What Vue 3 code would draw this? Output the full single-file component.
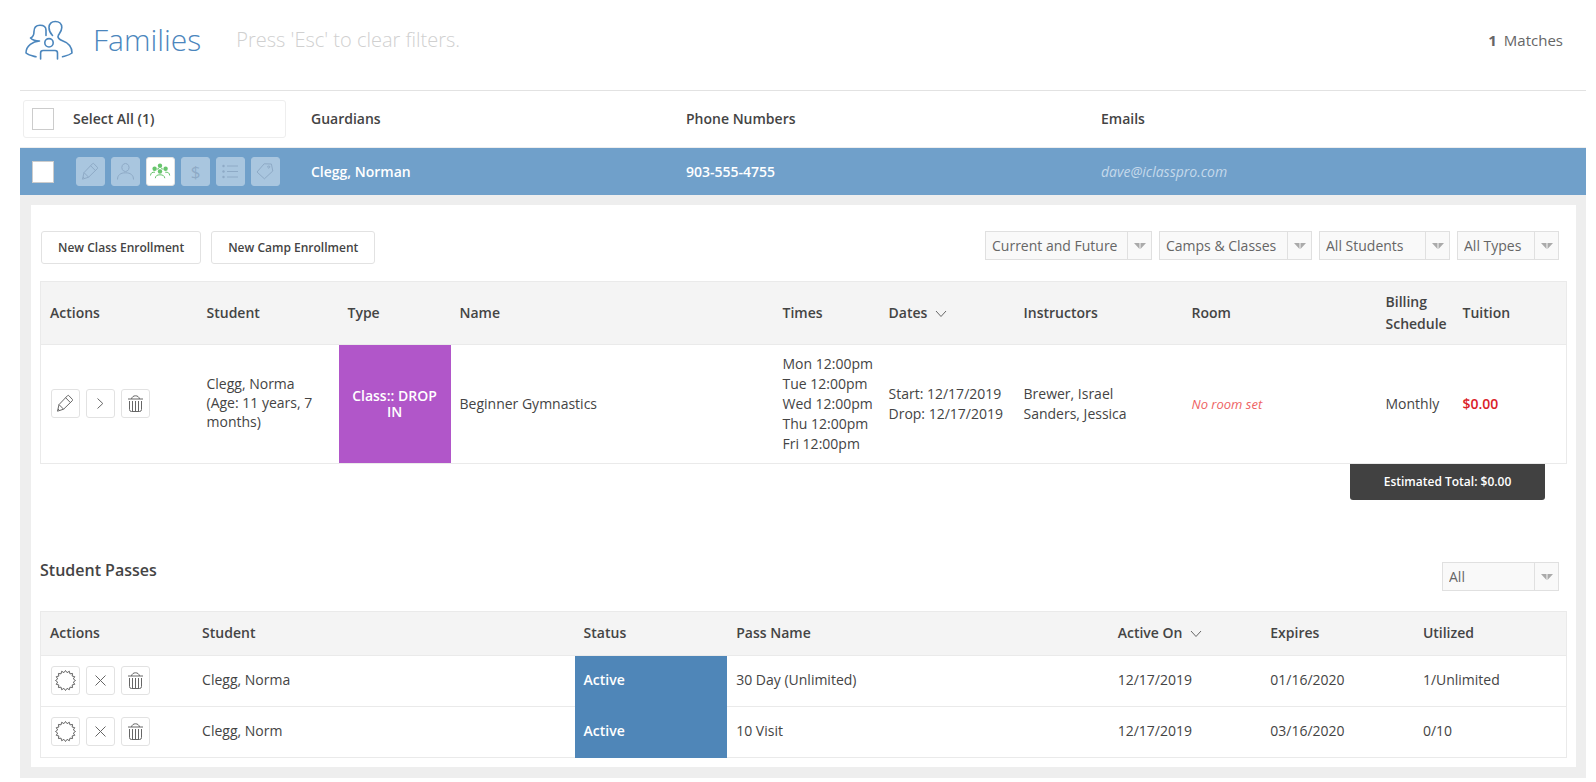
<script setup>
import { ref } from 'vue'

const selectAll = ref(false)
const rowSelected = ref(false)

const filters = [
  { id: 'period', label: 'Enrollment period', value: 'Current and Future', size: 'w-xl' },
  { id: 'kind', label: 'Camps or classes', value: 'Camps & Classes', size: 'w-lg' },
  { id: 'students', label: 'Students', value: 'All Students', size: 'w-md' },
  { id: 'types', label: 'Types', value: 'All Types', size: 'w-sm' },
]

const times = ['Mon 12:00pm', 'Tue 12:00pm', 'Wed 12:00pm', 'Thu 12:00pm', 'Fri 12:00pm']

const passes = [
  { student: 'Clegg, Norma', status: 'Active', name: '30 Day (Unlimited)', activeOn: '12/17/2019', expires: '01/16/2020', used: '1/Unlimited' },
  { student: 'Clegg, Norm', status: 'Active', name: '10 Visit', activeOn: '12/17/2019', expires: '03/16/2020', used: '0/10' },
]

const burst = Array.from({ length: 32 }, (_, i) => {
  const r = i % 2 ? 8 : 10
  const a = (i * Math.PI) / 16
  return `${(13.5 + r * Math.sin(a)).toFixed(2)},${(13.5 - r * Math.cos(a)).toFixed(2)}`
}).join(' ')

const icons = {
  pencil: 'M5.5 21.2L7 14.6 15.6 5.6Q16.2 5 16.8 5.6L20.4 9.4Q21 10 20.4 10.6L11.6 19.2ZM7 14.6L11.6 19.2M13.6 7.7L18.4 12.6M6 19L7.8 20.7',
  next: 'M10.5 8.5L15.8 13.5 10.5 18.5',
  trash: 'M6 9H21M9.5 9C10 6.8 11.5 5.8 13.5 5.8S17 6.8 17.5 9M7.5 11V19.5Q7.5 21.5 9.5 21.5H17.5Q19.5 21.5 19.5 19.5V11M10.5 11V21.5M13.5 11V21.5M16.5 11V21.5',
  close: 'M8.5 8.5L18.5 18.5M18.5 8.5L8.5 18.5',
  person: 'M13.5 5.5A3.6 4 0 1 1 13.4 5.5M5.5 21.5C5.5 17 8.5 14.8 13.5 14.8S21.5 17 21.5 21.5',
  list: 'M10 8H21M10 13.5H21M10 19H21',
  tag: 'M5 14L12.2 5.8 19.4 6 20.8 13 12.4 20.8ZM16.8 8A1 1 0 1 1 16.7 8',
}
</script>

<template>
  <main class="page">
    <header class="top">
      <svg class="logo" viewBox="0 0 48 40" aria-hidden="true">
        <path d="M27.5 15.500C25 13 24 10 24 7.500C24 3.700 26.500 1.500 30.300 1.500C34.300 1.500 36.800 4 36.800 7.500C36.800 11 34.500 13.500 33.500 15C32 17.500 34 19.500 38 21C45 23.500 47 27.500 47 33C44 35.500 40 36 37.500 36.800" />
        <path d="M21 15.500V10C21 7 18.500 5.200 15 5.200C10.500 5.200 9 8.500 9 11.500C9 15 8 17 5.500 18C7.500 20 11 21 14.500 21C8 21.500 1 25.500 1 33C4 35.500 8 36 11 36.800" />
        <circle cx="24" cy="22.800" r="4.200" />
        <path d="M15.600 39V33Q15.600 30.500 18.100 30.500H30Q32.500 30.500 32.500 33V39" />
      </svg>
      <h1>Families</h1>
      <p class="hint">Press 'Esc' to clear filters.</p>
      <p class="matches"><strong>1</strong>Matches</p>
    </header>

    <section class="list">
      <div class="cols heads">
        <label class="select-all">
          <input v-model="selectAll" type="checkbox" class="check" />
          <span>Select All (1)</span>
        </label>
        <span>Guardians</span>
        <span>Phone Numbers</span>
        <span>Emails</span>
      </div>

      <div class="cols family">
        <div class="tools">
          <input v-model="rowSelected" type="checkbox" class="check" aria-label="Select Clegg, Norman" />
          <div class="btns">
            <button type="button" class="icon tint" aria-label="Edit"><svg viewBox="0 0 27 27"><path :d="icons.pencil" /></svg></button>
            <button type="button" class="icon tint" aria-label="Guardian"><svg viewBox="0 0 27 27"><path :d="icons.person" /></svg></button>
            <button type="button" class="icon on" aria-label="Enrollments">
              <svg viewBox="0 0 27 27">
                <g class="solid"><circle cx="13" cy="7.700" r="2.200" /><circle cx="7.600" cy="10.700" r="2.200" /><circle cx="18.600" cy="10.700" r="2.200" /><circle cx="13" cy="13.500" r="2.200" /></g>
                <path d="M3.500 17.500C3.700 15 5 14 8 14.200M22.700 17.500C22.500 15 21.200 14 18.200 14.200M8.300 20.200C8.600 17.800 10 16.800 13 16.800S17.500 17.800 17.800 20.200M9.800 11.500C10.500 10.800 11.200 10.600 12 10.600M16.300 11.500C15.600 10.800 14.900 10.600 14.100 10.600" />
              </svg>
            </button>
            <button type="button" class="icon tint money" aria-label="Billing">$</button>
            <button type="button" class="icon tint" aria-label="Details">
              <svg viewBox="0 0 27 27"><path :d="icons.list" /><g class="solid"><circle cx="6.500" cy="8" r="1.200" /><circle cx="6.500" cy="13.500" r="1.200" /><circle cx="6.500" cy="19" r="1.200" /></g></svg>
            </button>
            <button type="button" class="icon tint" aria-label="Tags"><svg viewBox="0 0 27 27"><path :d="icons.tag" /></svg></button>
          </div>
        </div>
        <span>Clegg, Norman</span>
        <span>903-555-4755</span>
        <a href="mailto:dave@iclasspro.com">dave@iclasspro.com</a>
      </div>

      <div class="detail">
        <div class="bar">
          <div class="new">
            <button type="button" class="btn">New Class Enrollment</button>
            <button type="button" class="btn">New Camp Enrollment</button>
          </div>
          <div class="filters">
            <div v-for="f in filters" :key="f.id" class="drop" :class="f.size">
              <select :id="f.id" :aria-label="f.label"><option>{{ f.value }}</option></select>
              <span class="arrow"><svg viewBox="0 0 12 6"><path d="M0 0H5.500V6ZM6.500 0H12L6.500 6Z" /></svg></span>
            </div>
          </div>
        </div>

        <table class="enroll">
          <colgroup>
            <col class="c-act" /><col class="c-stu" /><col class="c-type" /><col /><col class="c-time" />
            <col class="c-date" /><col class="c-inst" /><col class="c-room" /><col class="c-bill" /><col class="c-tui" />
          </colgroup>
          <thead>
            <tr>
              <th>Actions</th><th>Student</th><th>Type</th><th>Name</th><th>Times</th>
              <th>Dates<svg class="sort" viewBox="0 0 12 8"><path d="M1 1L6 6.500 11 1" /></svg></th>
              <th>Instructors</th><th>Room</th><th>Billing Schedule</th><th>Tuition</th>
            </tr>
          </thead>
          <tbody>
            <tr>
              <td>
                <div class="btns">
                  <button type="button" class="icon" aria-label="Edit"><svg viewBox="0 0 27 27"><path :d="icons.pencil" /></svg></button>
                  <button type="button" class="icon" aria-label="Open"><svg viewBox="0 0 27 27"><path :d="icons.next" /></svg></button>
                  <button type="button" class="icon" aria-label="Delete"><svg viewBox="0 0 27 27"><path :d="icons.trash" /></svg></button>
                </div>
              </td>
              <td class="student">Clegg, Norma<br />(Age: 11 years, 7 months)</td>
              <td class="type">Class:: DROP IN</td>
              <td>Beginner Gymnastics</td>
              <td class="times"><div v-for="t in times" :key="t">{{ t }}</div></td>
              <td>Start: 12/17/2019<br />Drop: 12/17/2019</td>
              <td>Brewer, Israel<br />Sanders, Jessica</td>
              <td class="noroom">No room set</td>
              <td>Monthly</td>
              <td class="cost">$0.00</td>
            </tr>
          </tbody>
        </table>
        <div class="total">Estimated Total: $0.00</div>

        <div class="passes-head">
          <h2>Student Passes</h2>
          <div class="drop w-xs">
            <select id="pass-filter" aria-label="Pass filter"><option>All</option></select>
            <span class="arrow"><svg viewBox="0 0 12 6"><path d="M0 0H5.500V6ZM6.500 0H12L6.500 6Z" /></svg></span>
          </div>
        </div>

        <table class="passes">
          <colgroup>
            <col class="p10" /><col class="p25" /><col class="p10" /><col class="p25" /><col class="p10" /><col class="p10" /><col class="p10" />
          </colgroup>
          <thead>
            <tr>
              <th>Actions</th><th>Student</th><th>Status</th><th>Pass Name</th>
              <th>Active On<svg class="sort" viewBox="0 0 12 8"><path d="M1 1L6 6.500 11 1" /></svg></th>
              <th>Expires</th><th>Utilized</th>
            </tr>
          </thead>
          <tbody>
            <tr v-for="p in passes" :key="p.student">
              <td>
                <div class="btns">
                  <button type="button" class="icon" aria-label="Use pass"><svg viewBox="0 0 27 27"><polygon :points="burst" /></svg></button>
                  <button type="button" class="icon" aria-label="Cancel"><svg viewBox="0 0 27 27"><path :d="icons.close" /></svg></button>
                  <button type="button" class="icon" aria-label="Delete"><svg viewBox="0 0 27 27"><path :d="icons.trash" /></svg></button>
                </div>
              </td>
              <td>{{ p.student }}</td>
              <td class="status">{{ p.status }}</td>
              <td>{{ p.name }}</td>
              <td>{{ p.activeOn }}</td>
              <td>{{ p.expires }}</td>
              <td>{{ p.used }}</td>
            </tr>
          </tbody>
        </table>
      </div>
    </section>
  </main>
</template>

<style>
body {
  background: #fff;
}
</style>

<style scoped>
* {
  box-sizing: border-box;
}
.page {
  padding: 0 10px 4px 20px;
  font-family: "Open Sans", "Noto Sans", sans-serif;
  font-size: 14px;
  line-height: 20px;
  color: #444;
}
.top {
  display: flex;
  align-items: center;
  height: 90px;
  padding: 0 23px 11px 5px;
}
.logo {
  width: 48px;
  height: 40px;
  fill: none;
  stroke: #4b86bd;
  stroke-width: 1.6;
  stroke-linecap: round;
  stroke-linejoin: round;
}
h1 {
  margin: 0 0 0 20px;
  font-size: 30px;
  line-height: 40px;
  font-weight: 300;
  color: #4b86bd;
}
.hint {
  margin: 0 0 0 35px;
  font-size: 20px;
  line-height: 28px;
  font-weight: 300;
  color: #d0d0d0;
}
.matches {
  margin: 0 0 0 auto;
  font-size: 15px;
  color: #666;
}
.matches strong {
  margin-right: 7px;
}
.list {
  border-top: 1px solid #e2e2e2;
}
.cols {
  display: grid;
  grid-template-columns: 291px 375fr 415fr 485fr;
  align-items: center;
}
.heads {
  height: 57px;
  border-bottom: 1px solid #eee;
  font-weight: 600;
  color: #444;
}
.select-all {
  display: flex;
  align-items: center;
  gap: 19px;
  width: 263px;
  height: 38px;
  margin-left: 3px;
  padding-left: 8px;
  border: 1px solid #eee;
  border-radius: 3px;
}
.check {
  appearance: none;
  width: 22px;
  height: 22px;
  margin: 0;
  border: 1px solid #ccc;
  background: #fff;
}
.family {
  height: 47px;
  background: #70a0ca;
  color: #fff;
  font-weight: 600;
}
.family a {
  color: #c4d9eb;
  font-weight: 400;
  font-style: italic;
  text-decoration: none;
}
.tools {
  display: flex;
  align-items: center;
  gap: 22px;
  padding-left: 12px;
}
.btns {
  display: flex;
  gap: 6px;
}
.icon {
  display: flex;
  align-items: center;
  justify-content: center;
  width: 29px;
  height: 29px;
  padding: 0;
  border: 1px solid #e2e2e2;
  border-radius: 3px;
  background: #fff;
  color: #666;
}
.icon svg {
  width: 27px;
  height: 27px;
  flex: none;
  fill: none;
  stroke: currentColor;
  stroke-width: 1;
}
.icon .solid {
  fill: currentColor;
  stroke: none;
}
.icon.tint {
  border-color: #a9c6df;
  background: #a9c6df;
  color: #8eaac6;
}
.icon.on {
  color: #68c56d;
}
.icon.money {
  font: 400 17px/24px "Open Sans", sans-serif;
}
.detail {
  padding: 26px 8px 9px;
  border: solid #eee;
  border-width: 10px 10px 11px 11px;
  background: #fff;
}
.bar {
  display: flex;
  justify-content: space-between;
  align-items: flex-start;
  padding: 0 9px 0 2px;
  margin-bottom: 17px;
}
.new {
  display: flex;
  gap: 10px;
}
.btn {
  height: 33px;
  padding: 0 16px;
  border: 1px solid #e2e2e2;
  border-radius: 3px;
  background: #fff;
  font: 600 12px/20px "Open Sans", sans-serif;
  color: #444;
}
.filters {
  display: flex;
  gap: 7px;
}
.drop {
  position: relative;
  height: 29px;
}
.drop select {
  appearance: none;
  width: 100%;
  height: 100%;
  padding: 0 26px 0 6px;
  border: 1px solid #e0e0e0;
  border-radius: 0;
  background: #f9f9f9;
  font: 14px/20px "Open Sans", sans-serif;
  color: #666;
}
.arrow {
  position: absolute;
  top: 1px;
  right: 1px;
  bottom: 1px;
  display: flex;
  align-items: center;
  justify-content: center;
  width: 24px;
  border-left: 1px solid #e0e0e0;
  pointer-events: none;
}
.arrow svg {
  width: 12px;
  height: 6px;
  fill: #aaa;
}
.w-xl { width: 167px; }
.w-lg { width: 153px; }
.w-md { width: 131px; }
.w-sm { width: 102px; }
.w-xs { width: 117px; }
table {
  width: calc(100% - 2px);
  margin-left: 1px;
  table-layout: fixed;
  border-collapse: collapse;
  border: 1px solid #eaeaea;
}
th,
td {
  padding: 0 0 0 9px;
  text-align: left;
  font-weight: 400;
  border-bottom: 1px solid #eaeaea;
}
th {
  background: #f4f4f4;
  font-weight: 600;
  color: #444;
}
.enroll th {
  height: 63px;
  line-height: 22px;
}
.enroll td {
  height: 119px;
}
.c-act { width: 157px; }
.c-stu { width: 141px; }
.c-type { width: 112px; }
.c-time { width: 106px; }
.c-date { width: 135px; }
.c-inst { width: 168px; }
.c-room { width: 194px; }
.c-bill { width: 77px; }
.c-tui { width: 113px; }
.sort {
  width: 12px;
  height: 8px;
  margin-left: 8px;
  fill: none;
  stroke: #666;
  stroke-width: 1;
}
.enroll .student {
  padding: 0 24px 4px 9px;
  line-height: 19px;
}
.enroll .type {
  padding: 0 12px;
  background: #b156c9;
  color: #fff;
  font-weight: 600;
  line-height: 16px;
  text-align: center;
}
.times {
  white-space: nowrap;
}
.noroom {
  color: #ee6363;
  font-size: 13px;
  font-style: italic;
}
.enroll .cost {
  color: #da2128;
  font-weight: 600;
}
.total {
  width: 195px;
  height: 36px;
  margin-left: auto;
  margin-right: 23px;
  border-radius: 0 0 3px 3px;
  background: #414141;
  color: #fff;
  font-size: 12px;
  line-height: 36px;
  font-weight: 600;
  text-align: center;
}
.passes-head {
  display: flex;
  justify-content: space-between;
  align-items: flex-end;
  margin-top: 59px;
  padding: 0 9px 0 1px;
  margin-bottom: 20px;
}
h2 {
  margin: 0;
  padding-bottom: 10px;
  font-size: 16px;
  line-height: 22px;
  font-weight: 600;
  color: #444;
}
.p10 { width: 10%; }
.p25 { width: 25%; }
.passes th {
  height: 44px;
  padding-bottom: 2px;
}
.passes td {
  height: 51px;
  padding-bottom: 2px;
}
.passes .status {
  background: #4f86b8;
  border-color: #4f86b8;
  color: #fff;
  font-weight: 600;
}
td .btns {
  margin-left: 1px;
}
.enroll .btns {
  padding-bottom: 2px;
}
</style>
